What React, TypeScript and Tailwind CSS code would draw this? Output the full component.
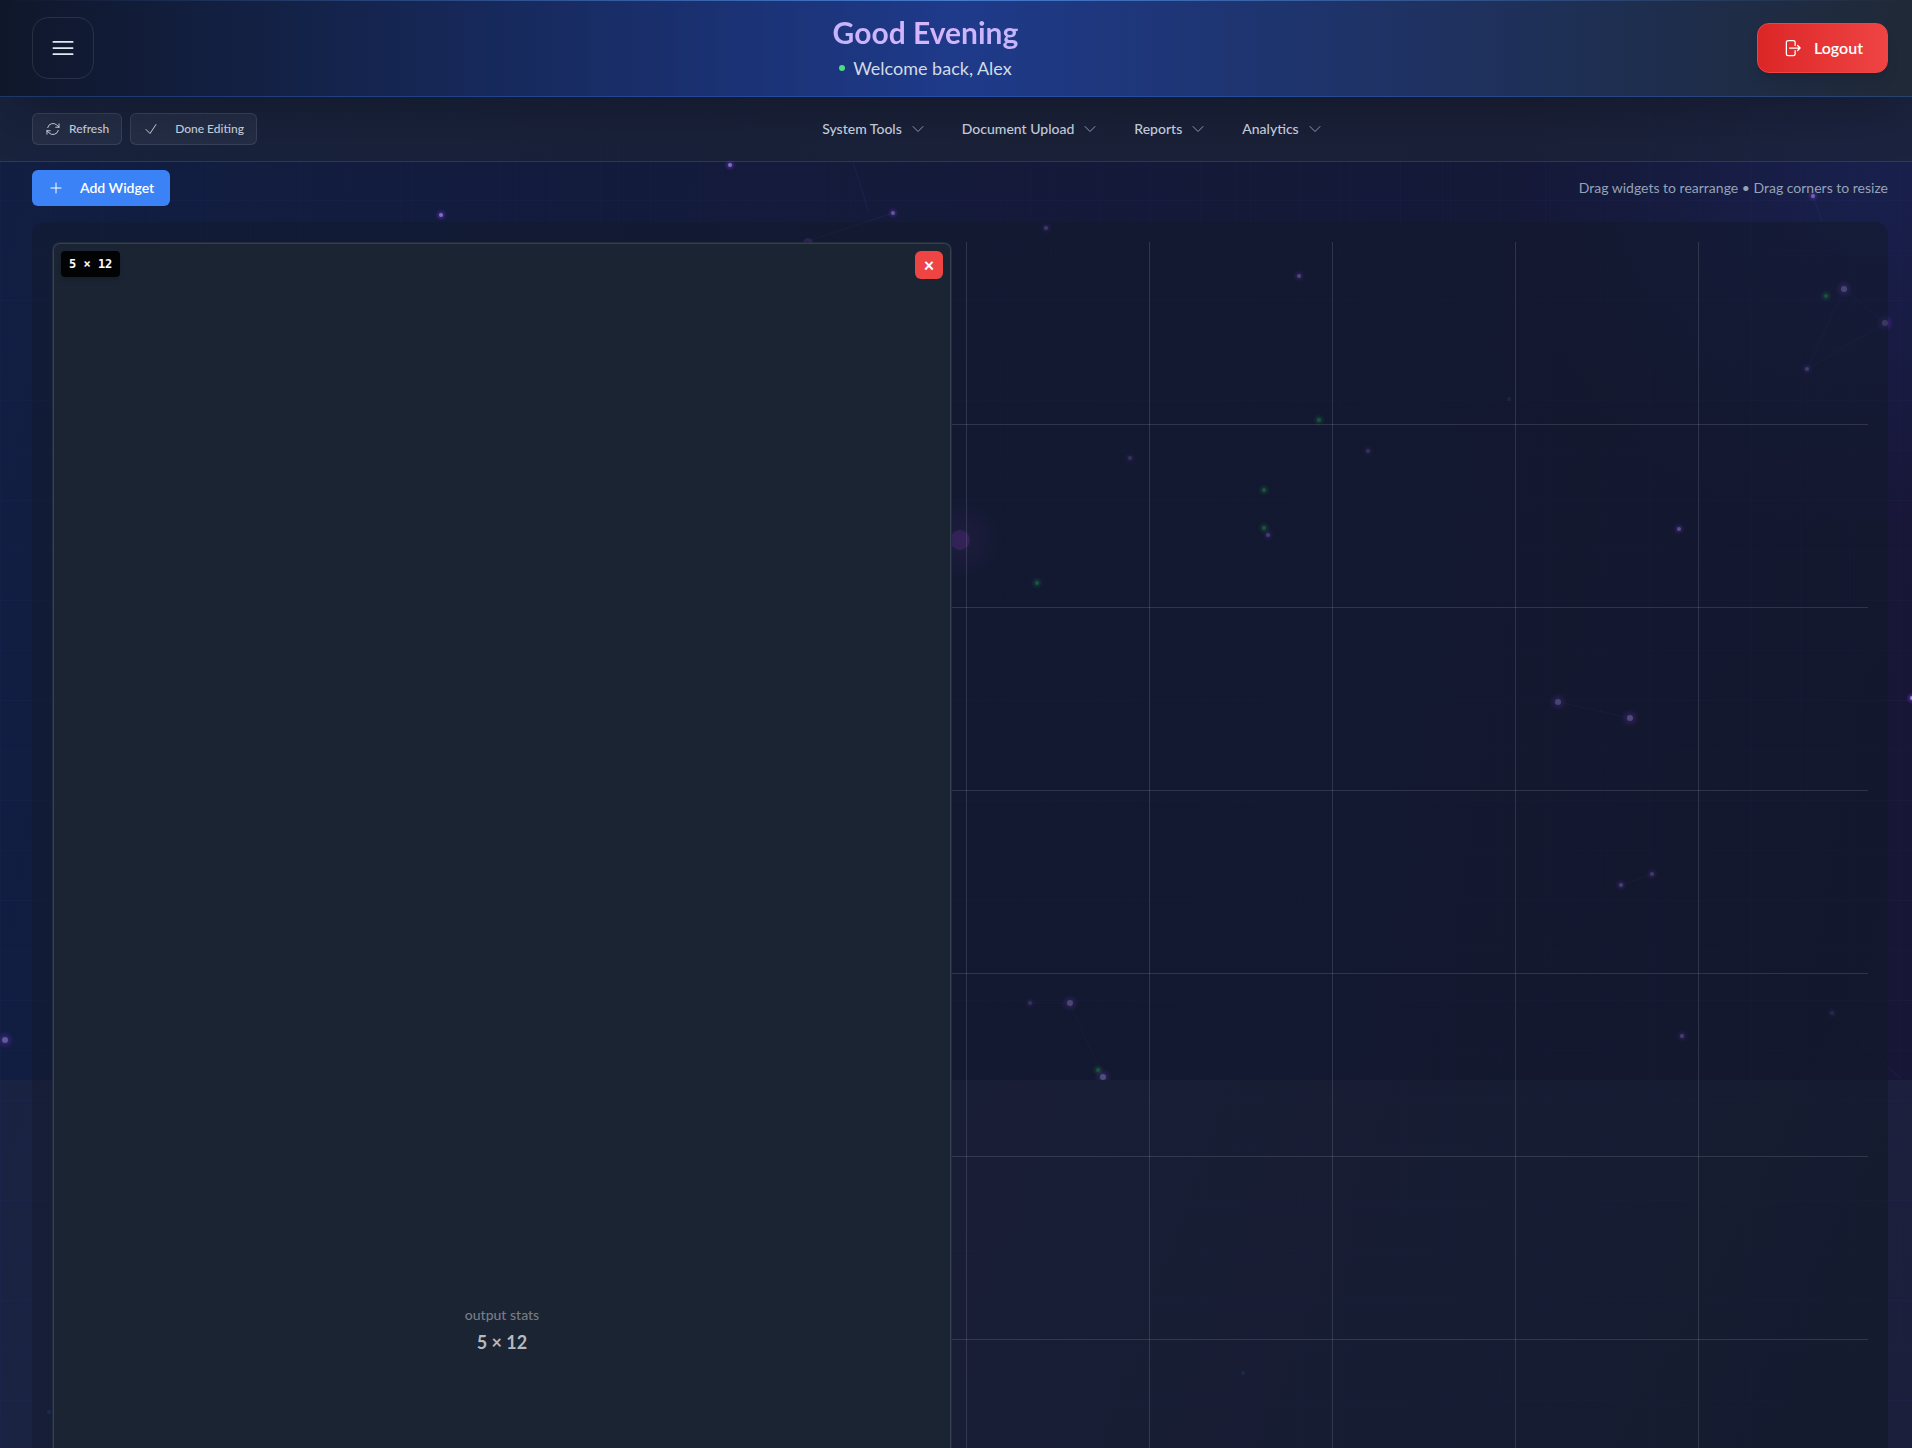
import {
  HiOutlineArrowPath,
  HiOutlineArrowRightOnRectangle,
  HiOutlineBars3,
  HiOutlineCheck,
  HiOutlineChevronDown,
  HiOutlinePlus,
} from "react-icons/hi2";

type Star = { x: number; y: number; r: number; o: number };

const STARS: Star[] = [
  { x: 730, y: 165, r: 2, o: 0.7 },
  { x: 441, y: 215, r: 2, o: 0.7 },
  { x: 893, y: 213, r: 2, o: 0.5 },
  { x: 1813, y: 196, r: 2, o: 0.6 },
  { x: 1046, y: 228, r: 2, o: 0.5 },
  { x: 1299, y: 276, r: 2, o: 0.7 },
  { x: 1844, y: 289, r: 3, o: 0.7 },
  { x: 1885, y: 323, r: 3, o: 0.5 },
  { x: 1807, y: 369, r: 2, o: 0.6 },
  { x: 1130, y: 458, r: 2, o: 0.4 },
  { x: 1368, y: 451, r: 2, o: 0.4 },
  { x: 1268, y: 535, r: 2, o: 0.6 },
  { x: 1679, y: 529, r: 2, o: 0.9 },
  { x: 1558, y: 702, r: 3, o: 0.7 },
  { x: 1630, y: 718, r: 3, o: 0.8 },
  { x: 1912, y: 698, r: 2, o: 0.9 },
  { x: 1652, y: 874, r: 2, o: 0.6 },
  { x: 1621, y: 885, r: 2, o: 0.7 },
  { x: 1030, y: 1003, r: 2, o: 0.4 },
  { x: 1070, y: 1003, r: 3, o: 0.7 },
  { x: 1103, y: 1077, r: 3, o: 0.8 },
  { x: 1682, y: 1036, r: 2, o: 0.7 },
  { x: 1832, y: 1013, r: 2, o: 0.3 },
  { x: 5, y: 1040, r: 3, o: 0.5 },
];

const GREEN_STARS = [
  [1826, 296],
  [1319, 420],
  [1264, 490],
  [1264, 528],
  [1037, 583],
  [1098, 1070],
];

const FAINT_STARS = [
  [1509, 399],
  [1243, 1373],
  [49, 1412],
];

const LINKS = [
  [853, 162, 869, 213],
  [893, 213, 808, 241],
  [1844, 289, 1885, 323],
  [1844, 289, 1807, 369],
  [1885, 323, 1807, 369],
  [1813, 196, 1822, 222],
  [1558, 702, 1630, 718],
  [1652, 874, 1621, 885],
  [1030, 1003, 1070, 1003],
  [1070, 1003, 1103, 1077],
  [1832, 1013, 1900, 1078],
];

function Starfield() {
  return (
    <svg className="absolute inset-0 h-full w-full" aria-hidden="true">
      <defs>
        <radialGradient id="violetGlow">
          <stop offset="0" stopColor="#7c3aed" stopOpacity="0.8" />
          <stop offset="1" stopColor="#7e22ce" stopOpacity="0" />
        </radialGradient>
        <radialGradient id="greenGlow">
          <stop offset="0" stopColor="#22c55e" stopOpacity="0.4" />
          <stop offset="1" stopColor="#22c55e" stopOpacity="0" />
        </radialGradient>
        <radialGradient id="orbGlow">
          <stop offset="0" stopColor="#7e3ab8" stopOpacity="0.2" />
          <stop offset="1" stopColor="#7e3ab8" stopOpacity="0" />
        </radialGradient>
        <clipPath id="canvas">
          <rect width="100%" height="1080" />
        </clipPath>
      </defs>
      <g clipPath="url(#canvas)">
        {LINKS.map(([x1, y1, x2, y2], i) => (
          <line key={i} x1={x1} y1={y1} x2={x2} y2={y2} stroke="#6366f1" strokeOpacity="0.1" />
        ))}
        <circle cx="960" cy="540" r="42" fill="url(#orbGlow)" />
        <circle cx="960" cy="540" r="10" fill="#7e3ab8" fillOpacity="0.45" />
        <circle cx="808" cy="243" r="5" fill="#7e3ab8" fillOpacity="0.45" />
        {STARS.map((s, i) => (
          <g key={i} opacity={s.o}>
            <circle cx={s.x} cy={s.y} r={s.r * 3} fill="url(#violetGlow)" />
            <circle cx={s.x} cy={s.y} r={s.r} fill="#b4b9ee" fillOpacity="0.8" />
          </g>
        ))}
        {GREEN_STARS.map(([x, y], i) => (
          <g key={i}>
            <circle cx={x} cy={y} r="6" fill="url(#greenGlow)" />
            <circle cx={x} cy={y} r="2" fill="#22c55e" fillOpacity="0.5" />
          </g>
        ))}
      </g>
      {FAINT_STARS.map(([x, y], i) => (
        <circle key={i} cx={x} cy={y} r="2" fill="#3b82f6" fillOpacity="0.25" />
      ))}
    </svg>
  );
}

function Backdrop() {
  return (
    <div className="absolute inset-0 flex flex-col overflow-hidden bg-[#1b1f3c]" aria-hidden="true">
      <div className="h-[1080px] shrink-0 bg-[linear-gradient(100deg,#111e42_0%,#141a3a_45%,#151837_80%,#181637_100%)]" />
      <div className="grow bg-[linear-gradient(110deg,#1a2242_0%,#1f2342_50%,#1b1f3c_100%)]" />
      <div className="absolute inset-0 bg-[radial-gradient(circle_at_98%_12%,rgba(30,58,138,0.25),transparent_16%)]" />
      <div className="absolute inset-0 bg-[linear-gradient(to_right,rgba(99,102,241,0.02)_1px,transparent_1px),linear-gradient(to_bottom,rgba(99,102,241,0.02)_1px,transparent_1px)] bg-[size:50px_50px]" />
      <div className="absolute inset-0 bg-[linear-gradient(to_right,rgba(99,102,241,0.02)_1px,transparent_1px),linear-gradient(to_bottom,rgba(99,102,241,0.02)_1px,transparent_1px)] bg-[size:103px_100px]" />
      <Starfield />
    </div>
  );
}

function Header() {
  return (
    <header className="relative z-20 flex items-center justify-between border-b border-[#3b82f6]/30 bg-[linear-gradient(90deg,#0f172a,#1e3a8a_50%,#1f2937)] py-[17px] pr-6 pl-8 shadow-2xl">
      <div className="absolute inset-x-0 top-0 h-px bg-linear-to-r from-transparent via-[#60a5fa]/60 to-transparent" />
      <button
        type="button"
        aria-label="Open menu"
        className="rounded-2xl border border-white/10 p-4 text-slate-200"
      >
        <HiOutlineBars3 className="size-7" />
      </button>
      <div className="-my-4 flex flex-col items-center gap-1">
        <h1 className="bg-[linear-gradient(90deg,#c4b5fd,#d8b4fe_50%,#c4b5fd)] bg-clip-text text-[30px] leading-9 font-bold text-transparent">
          Good Evening
        </h1>
        <p className="flex items-center gap-2 text-lg leading-7 text-[#d3dbe6]">
          <span className="size-1.5 rounded-full bg-[#4ade80]" />
          Welcome back, Alex
        </p>
      </div>
      <button
        type="button"
        className="flex items-center gap-3 rounded-xl border border-[#ef4444] bg-[linear-gradient(90deg,#dc2626,#ef4444)] px-6 py-3 text-base font-semibold text-white shadow-lg"
      >
        <HiOutlineArrowRightOnRectangle className="size-5" />
        Logout
      </button>
    </header>
  );
}

const MENUS = ["System Tools", "Document Upload", "Reports", "Analytics"];

function Toolbar() {
  const action =
    "flex h-8 items-center gap-2 rounded-md border border-white/10 bg-white/5 px-3 text-xs font-medium text-[#cbd5e1]";
  return (
    <nav className="relative z-10 flex items-center border-b border-white/10 bg-[#1e2739]/60 py-4 pr-6 pl-8">
      <div className="flex gap-2">
        <button type="button" className={action}>
          <HiOutlineArrowPath className="size-4" />
          Refresh
        </button>
        <button type="button" className={action}>
          <HiOutlineCheck className="mr-2 size-4" />
          Done Editing
        </button>
      </div>
      <div className="flex grow justify-center gap-1">
        {MENUS.map((label) => (
          <button
            key={label}
            type="button"
            aria-haspopup="menu"
            className="flex items-center gap-2 px-4 text-sm font-medium text-[#cbd5e1]"
          >
            {label}
            <HiOutlineChevronDown className="size-4 text-[#94a3b8]" />
          </button>
        ))}
      </div>
    </nav>
  );
}

function Widget() {
  return (
    <section className="relative flex h-[2176px] w-[900px] max-w-full flex-col items-center justify-center gap-1 rounded-lg border border-slate-700/30 bg-[#1b2432] shadow-[inset_0_0_0_1px_#334150]">
      <span className="absolute top-2 left-2 rounded bg-black/90 px-2 py-1 font-[DejaVu_Sans_Mono,monospace] text-xs leading-[18px] font-bold text-white shadow-md">
        5 × 12
      </span>
      <button
        type="button"
        aria-label="Remove widget"
        className="absolute top-2 right-2 flex size-7 items-center justify-center rounded-md bg-[#ef4444] text-lg leading-none font-black text-white"
      >
        ×
      </button>
      <p className="text-sm leading-[21px] font-medium text-[#777c86]">output stats</p>
      <p className="text-lg leading-[27px] font-bold text-[#b5b9c0]">5 × 12</p>
    </section>
  );
}

export default function App() {
  return (
    <div className="relative flex h-screen flex-col overflow-hidden bg-[#141a36] font-[Lato,sans-serif]">
      <Backdrop />
      <Header />
      <Toolbar />
      <main className="relative min-h-0 grow overflow-hidden pt-2 pr-6 pl-8">
        <div className="flex items-center justify-between">
          <button
            type="button"
            className="flex h-9 items-center gap-2 rounded-md bg-[#3b82f6] px-4 text-sm font-semibold text-white"
          >
            <HiOutlinePlus className="mr-2 size-4" />
            Add Widget
          </button>
          <p className="text-sm text-[#94a3b8]">Drag widgets to rearrange • Drag corners to resize</p>
        </div>
        <div className="mt-4 rounded-xl bg-[linear-gradient(120deg,rgba(17,24,39,0.4),rgba(17,24,39,0.5)_60%,rgba(15,26,39,0.7))] p-5">
          <div className="bg-[linear-gradient(to_right,transparent_182px,rgba(255,255,255,0.12)_182px),linear-gradient(to_bottom,transparent_182px,rgba(255,255,255,0.12)_182px)] bg-[size:183px_183px]">
            <Widget />
          </div>
        </div>
      </main>
    </div>
  );
}
